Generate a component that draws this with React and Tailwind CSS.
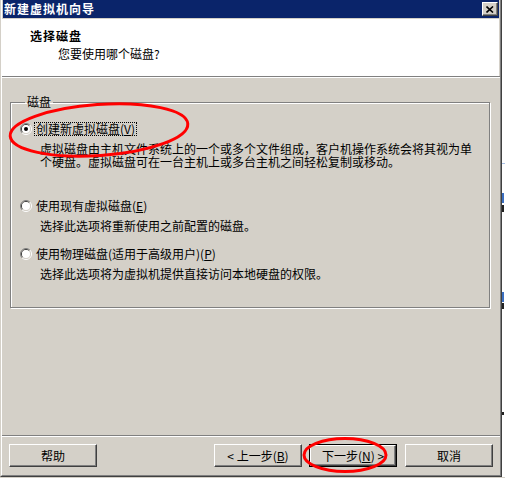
import React from 'react';

const font = { fontFamily: '"Noto Sans CJK SC", "Noto Sans", sans-serif' };

function Radio({ checked }) {
  return (
    <svg width="12" height="12" viewBox="0 0 12 12" className="shrink-0">
      <path d="M9.9 2.1 A5.5 5.5 0 0 0 2.1 9.9" stroke="#808080" fill="none" />
      <path d="M9.2 2.8 A4.5 4.5 0 0 0 2.8 9.2" stroke="#404040" fill="none" />
      <path d="M9.9 2.1 A5.5 5.5 0 0 1 2.1 9.9" stroke="#ffffff" fill="none" />
      <path d="M9.2 2.8 A4.5 4.5 0 0 1 2.8 9.2" stroke="#d4d0c8" fill="none" />
      <circle cx="6" cy="6" r="4" fill="#fff" />
      {checked && <circle cx="6" cy="6" r="2" fill="#000" />}
    </svg>
  );
}

function Btn({ children, isDefault }) {
  const face = (
    <div className="flex h-full w-full items-center justify-center border border-t-white border-l-white border-r-[#404040] border-b-[#404040] bg-[#d4d0c8] shadow-[inset_-1px_-1px_0_#808080] text-[12px] leading-[12px] text-black">
      {children}
    </div>
  );
  if (isDefault) {
    return <div className="h-[23px] w-[88px] border border-black">{face}</div>;
  }
  return <div className="h-[23px] w-[88px]">{face}</div>;
}

function Option({ checked, focused, label, children, gapTop }) {
  return (
    <div className={gapTop}>
      <div className="flex h-[16px] items-center">
        <Radio checked={checked} />
        <span
          className={
            'ml-[2px] whitespace-nowrap px-[1px] text-[12px] leading-[12px] ' +
            (focused ? 'border border-dotted border-black' : 'border border-transparent')
          }
        >
          {label}
        </span>
      </div>
      <div className="ml-[20px] mt-[5px] whitespace-nowrap text-[12px] leading-[13px]">{children}</div>
    </div>
  );
}

export default function App() {
  return (
    <div className="relative flex h-[478px] w-[505px] flex-col bg-white text-black" style={font}>
      <div className="flex h-[477px]">
        {/* Dialog */}
        <div className="flex h-full w-[502px] shrink-0 border-l border-r border-b border-l-[#d4d0c8] border-r-[#404040] border-b-[#404040]">
          <div className="flex flex-1 flex-col border-l border-r border-b border-l-white border-r-[#808080] border-b-[#808080] bg-[#d4d0c8] px-[1px]">
            {/* Title bar */}
            <div className="flex h-[18px] items-center justify-between bg-[#0a246a] pl-[1px] pr-[1px]">
              <span className="text-[12px] font-bold leading-[12px] tracking-[1px] text-white">新建虚拟机向导</span>
              <div className="flex h-[14px] w-[16px] items-center justify-center border border-t-white border-l-white border-r-[#404040] border-b-[#404040] bg-[#d4d0c8] shadow-[inset_-1px_-1px_0_#808080]">
                <svg width="8" height="7" viewBox="0 0 8 7">
                  <path d="M0.5 0.5 L7 6.5 M7 0.5 L0.5 6.5" stroke="#000" strokeWidth="1.6" />
                </svg>
              </div>
            </div>

            {/* Header */}
            <div className="-ml-[1px] mt-[1px] h-[57px] bg-white pl-[28px] pt-[11px]">
              <div className="text-[12px] font-bold leading-[12px] tracking-[1px]">选择磁盘</div>
              <div className="ml-[28px] mt-[6px] text-[12px] leading-[12px]">您要使用哪个磁盘?</div>
            </div>
            <div className="-mx-[1px] h-[1px] bg-[#808080]" />
            <div className="-mx-[1px] h-[1px] bg-white" />

            {/* Body */}
            <div className="flex flex-1 flex-col">
              <fieldset className="ml-[7px] mt-[18px] h-[212px] w-[480px] border border-[#808080] pl-[9px] pt-[13px] shadow-[1px_1px_0_#fff,inset_1px_1px_0_#fff]">
                <legend className="ml-[5px] px-[2px] text-[12px] leading-[12px]">磁盘</legend>
                <Option
                  checked
                  focused
                  label={
                    <>
                      创建新虚拟磁盘(<span className="underline">V</span>)
                    </>
                  }
                >
                  虚拟磁盘由主机文件系统上的一个或多个文件组成，客户机操作系统会将其视为单
                  <br />
                  个硬盘。虚拟磁盘可在一台主机上或多台主机之间轻松复制或移动。
                </Option>
                <Option
                  gapTop="mt-[30px]"
                  label={
                    <>
                      使用现有虚拟磁盘(<span className="underline">E</span>)
                    </>
                  }
                >
                  选择此选项将重新使用之前配置的磁盘。
                </Option>
                <Option
                  gapTop="mt-[14px]"
                  label={
                    <>
                      使用物理磁盘(适用于高级用户)(<span className="underline">P</span>)
                    </>
                  }
                >
                  选择此选项将为虚拟机提供直接访问本地硬盘的权限。
                </Option>
              </fieldset>

              <div className="flex-1" />
              <div className="-mx-[1px] h-[1px] bg-[#808080]" />
              <div className="-mx-[1px] h-[1px] bg-white" />

              {/* Buttons */}
              <div className="mb-[8px] mt-[7px] flex items-center pl-[6px] pr-[6px]">
                <Btn>帮助</Btn>
                <div className="flex-1" />
                <Btn>
                  &lt; 上一步(<span className="underline">B</span>)
                </Btn>
                <div className="w-[7px]" />
                <Btn isDefault>
                  下一步(<span className="underline">N</span>) &gt;
                </Btn>
                <div className="w-[8px]" />
                <Btn>取消</Btn>
              </div>
            </div>
          </div>
        </div>

        {/* Window behind, right edge */}
        <div className="flex flex-1 flex-col bg-white">
          <div className="mt-[163px] h-[1px] bg-[#a9c0e6]" />
          <div className="mt-[29px] h-[10px] w-[2px] bg-[#3a6ec0]" />
          <div className="mt-[2px] h-[7px] w-[2px] bg-[#222]" />
          <div className="mt-[80px] h-[10px] w-[2px] bg-[#3a6ec0]" />
          <div className="mt-[1px] h-[6px] w-[2px] bg-[#222]" />
          <div className="mt-[103px] h-[3px] w-[2px] bg-[#222]" />
        </div>
      </div>
      <div className="h-[1px] bg-[#d4d0c8]" />

      {/* Red annotation marks */}
      <svg className="pointer-events-none absolute left-0 top-0" width="505" height="478">
        <ellipse cx="99" cy="130" rx="89" ry="25.5" fill="none" stroke="#ff0000" strokeWidth="3" transform="rotate(-4 99 130)" />
        <ellipse cx="345" cy="455" rx="41" ry="16.5" fill="none" stroke="#ff0000" strokeWidth="3" />
      </svg>
    </div>
  );
}
